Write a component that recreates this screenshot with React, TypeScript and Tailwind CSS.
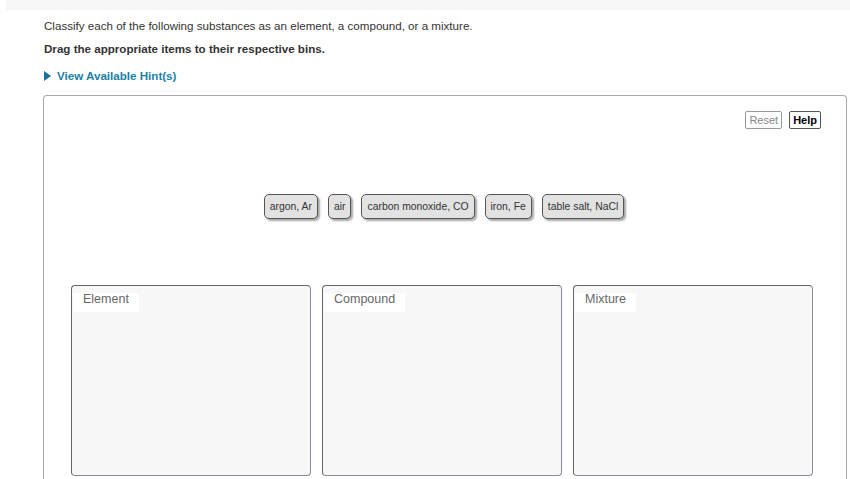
import React from 'react';

const items = ['argon, Ar', 'air', 'carbon monoxide, CO', 'iron, Fe', 'table salt, NaCl'];
const bins = ['Element', 'Compound', 'Mixture'];

export default function App() {
  return (
    <div className="w-[850px] h-[479px] overflow-hidden bg-white font-['Liberation_Sans',Arial,sans-serif]">
      {/* top strip */}
      <div className="ml-[6px] h-[10px] bg-[#f7f7f7]" />

      <div className="pl-[44px] pt-[9px] text-[11.6px] text-[#333]">
        <p className="leading-[14px]">Classify each of the following substances as an element, a compound, or a mixture.</p>
        <p className="mt-[9px] leading-[14px] font-bold">Drag the appropriate items to their respective bins.</p>
        <div className="mt-[13px] flex items-center gap-[6px] leading-[14px] font-bold text-[#1b7fa6]">
          <svg width="7" height="10" viewBox="0 0 7 10">
            <path d="M0 0 L7 5 L0 10 Z" fill="#1b6fa0" />
          </svg>
          <span>View Available Hint(s)</span>
        </div>
      </div>

      {/* work area */}
      <div className="ml-[43px] mr-[3px] mt-[12px] h-[400px] rounded-t-[4px] border border-[#aaa] border-b-0">
        <div className="flex justify-end gap-[7px] pt-[15px] pr-[25px] text-[11px] leading-[14px]">
          <button className="px-[3px] py-[1px] border border-[#999] rounded-[2px] text-[#888] bg-white">Reset</button>
          <button className="px-[3px] py-[1px] border border-[#555] rounded-[2px] text-black font-bold bg-white">Help</button>
        </div>

        <div className="flex justify-center gap-[10px] mt-[65px] pr-[2px]">
          {items.map((t) => (
            <div
              key={t}
              className="h-[25px] px-[5px] flex items-center text-[10.4px] text-[#333] bg-[#e2e2e2] border border-[#555] rounded-[5px] shadow-[2px_2px_2px_rgba(0,0,0,0.35)]"
            >
              {t}
            </div>
          ))}
        </div>

        <div className="flex gap-[11px] pl-[27px] mt-[66px]">
          {bins.map((b) => (
            <div
              key={b}
              className="w-[240px] h-[191px] bg-[#f7f7f7] rounded-[4px] border border-[#666] border-b-[#8a8a98] border-r-[#8a8a98]"
            >
              <div className="inline-block ml-[1px] bg-white pl-[10px] pr-[10px] pt-0 pb-[7px] text-[12.5px] leading-[12px] text-[#666]">
                {b}
              </div>
            </div>
          ))}
        </div>
      </div>
    </div>
  );
}
